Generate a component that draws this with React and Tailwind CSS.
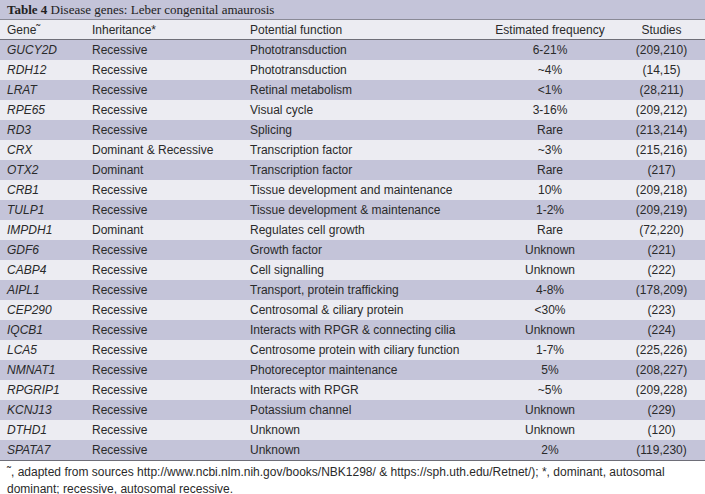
const rows = [
  ['GUCY2D', 'Recessive', 'Phototransduction', '6-21%', '(209,210)'],
  ['RDH12', 'Recessive', 'Phototransduction', '~4%', '(14,15)'],
  ['LRAT', 'Recessive', 'Retinal metabolism', '<1%', '(28,211)'],
  ['RPE65', 'Recessive', 'Visual cycle', '3-16%', '(209,212)'],
  ['RD3', 'Recessive', 'Splicing', 'Rare', '(213,214)'],
  ['CRX', 'Dominant & Recessive', 'Transcription factor', '~3%', '(215,216)'],
  ['OTX2', 'Dominant', 'Transcription factor', 'Rare', '(217)'],
  ['CRB1', 'Recessive', 'Tissue development and maintenance', '10%', '(209,218)'],
  ['TULP1', 'Recessive', 'Tissue development & maintenance', '1-2%', '(209,219)'],
  ['IMPDH1', 'Dominant', 'Regulates cell growth', 'Rare', '(72,220)'],
  ['GDF6', 'Recessive', 'Growth factor', 'Unknown', '(221)'],
  ['CABP4', 'Recessive', 'Cell signalling', 'Unknown', '(222)'],
  ['AIPL1', 'Recessive', 'Transport, protein trafficking', '4-8%', '(178,209)'],
  ['CEP290', 'Recessive', 'Centrosomal & ciliary protein', '<30%', '(223)'],
  ['IQCB1', 'Recessive', 'Interacts with RPGR & connecting cilia', 'Unknown', '(224)'],
  ['LCA5', 'Recessive', 'Centrosome protein with ciliary function', '1-7%', '(225,226)'],
  ['NMNAT1', 'Recessive', 'Photoreceptor maintenance', '5%', '(208,227)'],
  ['RPGRIP1', 'Recessive', 'Interacts with RPGR', '~5%', '(209,228)'],
  ['KCNJ13', 'Recessive', 'Potassium channel', 'Unknown', '(229)'],
  ['DTHD1', 'Recessive', 'Unknown', 'Unknown', '(120)'],
  ['SPATA7', 'Recessive', 'Unknown', '2%', '(119,230)'],
];

function Row({ cells, shaded }) {
  const [gene, inh, fn, freq, studies] = cells;
  return (
    <div
      className={`flex h-[20px] items-center text-[12px] text-[#2a2a2a] ${shaded ? 'bg-[#c4c4d9]' : 'bg-[#ececf2]'}`}
    >
      <div className="w-[92px] pl-[7px] italic">{gene}</div>
      <div className="w-[158px]">{inh}</div>
      <div className="w-[232px]">{fn}</div>
      <div className="w-[136px] text-center">{freq}</div>
      <div className="flex-1 text-center">{studies}</div>
    </div>
  );
}

export default function App() {
  return (
    <div className="w-[705px] bg-white font-['Liberation_Sans',Arial,sans-serif]">
      <div className="h-[20px] bg-[#c4c4d9] pl-[7px] flex items-center border-b border-[#8a8a96] font-['Liberation_Serif','Times_New_Roman',serif] text-[13px] text-[#222]">
        <b>Table 4</b>&nbsp;Disease genes: Leber congenital amaurosis
      </div>
      <div className="flex h-[20px] items-center bg-[#ececf2] border-b border-[#6e6e78] text-[12px] text-[#2a2a2a]">
        <div className="w-[92px] pl-[7px]">Gene˜</div>
        <div className="w-[158px]">Inheritance*</div>
        <div className="w-[232px]">Potential function</div>
        <div className="w-[136px] text-center">Estimated frequency</div>
        <div className="flex-1 text-center">Studies</div>
      </div>
      {rows.map((r, i) => (
        <Row key={r[0]} cells={r} shaded={i % 2 === 0} />
      ))}
      <div className="border-t border-[#6e6e78] bg-white px-[7px] pt-[3px] text-[12px] leading-[17px] text-[#2a2a2a]">
        ˜, adapted from sources http://www.ncbi.nlm.nih.gov/books/NBK1298/ &amp; https://sph.uth.edu/Retnet/); *, dominant, autosomal dominant; recessive, autosomal recessive.
      </div>
    </div>
  );
}
